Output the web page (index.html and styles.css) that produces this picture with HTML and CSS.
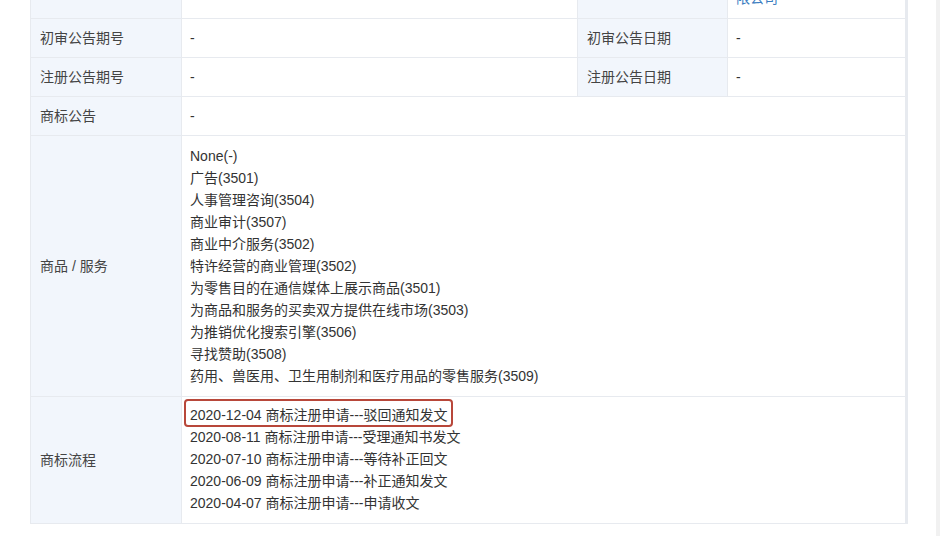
FILE: index.html
```html
<!DOCTYPE html>
<html lang="zh-CN">
<head>
<meta charset="utf-8">
<title>商标详情</title>
<link rel="stylesheet" href="styles.css">
</head>
<body>
<div class="page">
  <div class="main">
    <div class="info">
      <div class="cell label top"></div>
      <div class="cell value top"></div>
      <div class="cell label top"></div>
      <div class="cell value top"><span class="hidden-line">深圳市某某科技有</span><span class="link">限公司</span></div>

      <div class="cell label">初审公告期号</div>
      <div class="cell value">-</div>
      <div class="cell label">初审公告日期</div>
      <div class="cell value">-</div>

      <div class="cell label">注册公告期号</div>
      <div class="cell value">-</div>
      <div class="cell label">注册公告日期</div>
      <div class="cell value">-</div>

      <div class="cell label">商标公告</div>
      <div class="cell value wide">-</div>

      <div class="cell label">商品 / 服务</div>
      <div class="cell value wide list">
        <div>None(-)</div>
        <div>广告(3501)</div>
        <div>人事管理咨询(3504)</div>
        <div>商业审计(3507)</div>
        <div>商业中介服务(3502)</div>
        <div>特许经营的商业管理(3502)</div>
        <div>为零售目的在通信媒体上展示商品(3501)</div>
        <div>为商品和服务的买卖双方提供在线市场(3503)</div>
        <div>为推销优化搜索引擎(3506)</div>
        <div>寻找赞助(3508)</div>
        <div>药用、兽医用、卫生用制剂和医疗用品的零售服务(3509)</div>
      </div>

      <div class="cell label">商标流程</div>
      <div class="cell value wide list flow">
        <div><span class="hl">2020-12-04 商标注册申请---驳回通知发文</span></div>
        <div>2020-08-11 商标注册申请---受理通知书发文</div>
        <div>2020-07-10 商标注册申请---等待补正回文</div>
        <div>2020-06-09 商标注册申请---补正通知发文</div>
        <div>2020-04-07 商标注册申请---申请收文</div>
      </div>
    </div>
  </div>
  <div class="scroll-track"></div>
</div>
</body>
</html>
```

FILE: styles.css
```css
html, body {
  margin: 0;
  padding: 0;
  background: #ffffff;
  overflow: hidden;
}

body {
  font-family: "Liberation Sans", "Noto Sans CJK SC", sans-serif;
  font-size: 14px;
  color: #333333;
}

.page {
  display: flex;
  width: 940px;
  height: 536px;
  overflow: hidden;
}

.main {
  flex: 1;
  padding-left: 30px;
}

.scroll-track {
  width: 4px;
  background: #f1f1f1;
}

.info {
  width: 876px;
  margin-top: -43px;
  display: grid;
  grid-template-columns: 150px 395px 149px 177px;
  gap: 1px;
  padding: 1px;
  background: #e7eaef;
}

.cell {
  display: flex;
  align-items: center;
  padding: 0 8px;
  min-height: 38px;
  line-height: 22px;
}

.label {
  background: #f2f6fc;
  color: #444444;
  padding-left: 9px;
}

.value {
  background: #ffffff;
  color: #333333;
}

.top {
  height: 60px;
  align-items: flex-start;
  flex-direction: column;
  padding-top: 7px;
  box-sizing: border-box;
}

.hidden-line {
  color: #3b7dc1;
}

.link {
  color: #3b7dc1;
}

.wide {
  grid-column: span 3;
}

.list {
  flex-direction: column;
  align-items: flex-start;
  padding-top: 9px;
  padding-bottom: 9px;
}

.flow {
  padding-top: 7px;
  padding-bottom: 9px;
}

.hl {
  position: relative;
  display: inline-block;
}

.hl::after {
  content: "";
  position: absolute;
  left: -6px;
  right: -5px;
  top: -5px;
  bottom: -1px;
  border: 2px solid #b8473a;
  border-radius: 4px;
}
```
